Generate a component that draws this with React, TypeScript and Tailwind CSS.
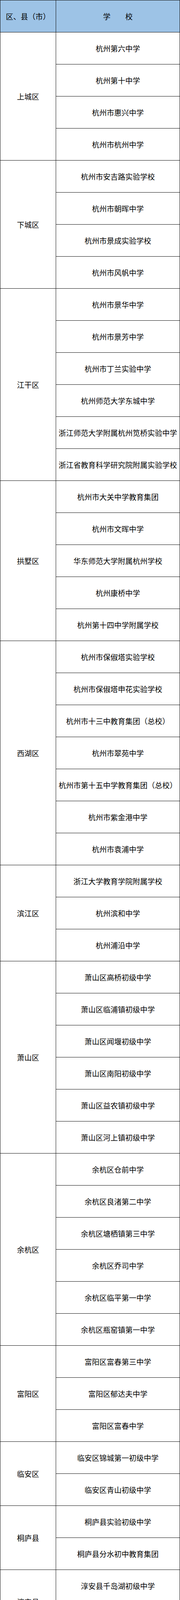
const GROUPS: { district: string; schools: string[] }[] = [
  { district: '上城区', schools: ['杭州第六中学', '杭州第十中学', '杭州市惠兴中学', '杭州市杭州中学'] },
  { district: '下城区', schools: ['杭州市安吉路实验学校', '杭州市朝晖中学', '杭州市景成实验学校', '杭州市风帆中学'] },
  {
    district: '江干区',
    schools: [
      '杭州市景华中学',
      '杭州市景芳中学',
      '杭州市丁兰实验中学',
      '杭州师范大学东城中学',
      '浙江师范大学附属杭州笕桥实验中学',
      '浙江省教育科学研究院附属实验学校',
    ],
  },
  {
    district: '拱墅区',
    schools: ['杭州市大关中学教育集团', '杭州市文晖中学', '华东师范大学附属杭州学校', '杭州康桥中学', '杭州第十四中学附属学校'],
  },
  {
    district: '西湖区',
    schools: [
      '杭州市保俶塔实验学校',
      '杭州市保俶塔申花实验学校',
      '杭州市十三中教育集团（总校）',
      '杭州市翠苑中学',
      '杭州市第十五中学教育集团（总校）',
      '杭州市紫金港中学',
      '杭州市袁浦中学',
    ],
  },
  { district: '滨江区', schools: ['浙江大学教育学院附属学校', '杭州滨和中学', '杭州浦沿中学'] },
  {
    district: '萧山区',
    schools: [
      '萧山区高桥初级中学',
      '萧山区临浦镇初级中学',
      '萧山区闻堰初级中学',
      '萧山区南阳初级中学',
      '萧山区益农镇初级中学',
      '萧山区河上镇初级中学',
    ],
  },
  {
    district: '余杭区',
    schools: [
      '余杭区仓前中学',
      '余杭区良渚第二中学',
      '余杭区塘栖镇第三中学',
      '余杭区乔司中学',
      '余杭区临平第一中学',
      '余杭区瓶窑镇第一中学',
    ],
  },
  { district: '富阳区', schools: ['富阳区富春第三中学', '富阳区郁达夫中学', '富阳区富春中学'] },
  { district: '临安区', schools: ['临安区锦城第一初级中学', '临安区青山初级中学'] },
  { district: '桐庐县', schools: ['桐庐县实验初级中学', '桐庐县分水初中教育集团'] },
  { district: '淳安县', schools: ['淳安县千岛湖初级中学', '淳安县汾口镇初级中学'] },
  { district: '建德市', schools: ['建德市新安江第三初级中学', '建德市梅城初级中学'] },
  { district: '钱塘新区', schools: ['杭州市下沙中学', '钱塘新区景苑中学', '钱塘新区新围中学'] },
];

// one district block: district cell on the left, one 82px row per school on the right
function Group({ district, schools, header }: { district: string; schools: string[]; header?: boolean }) {
  return (
    <div className={`flex border-b border-[#111] ${header ? 'bg-[#9dc3e6]' : ''}`}>
      <div className="w-[143px] shrink-0 border-r border-[#111] flex items-center justify-center whitespace-nowrap">
        {district}
      </div>
      <div className="flex-1 flex flex-col">
        {schools.map((school) => (
          <div
            key={school}
            className="h-[82px] border-b border-[#111] last:h-[81px] last:border-b-0 flex items-center justify-center whitespace-nowrap"
          >
            {school}
          </div>
        ))}
      </div>
    </div>
  );
}

export default function App() {
  return (
    <div className="w-[462px] bg-white text-black text-[19px] leading-none font-['Noto_Sans_CJK_SC',sans-serif] border-t border-l border-r border-[#111]">
      <Group header district="区、县（市）" schools={['学　　校']} />
      {GROUPS.map((group) => (
        <Group key={group.district} district={group.district} schools={group.schools} />
      ))}
    </div>
  );
}
